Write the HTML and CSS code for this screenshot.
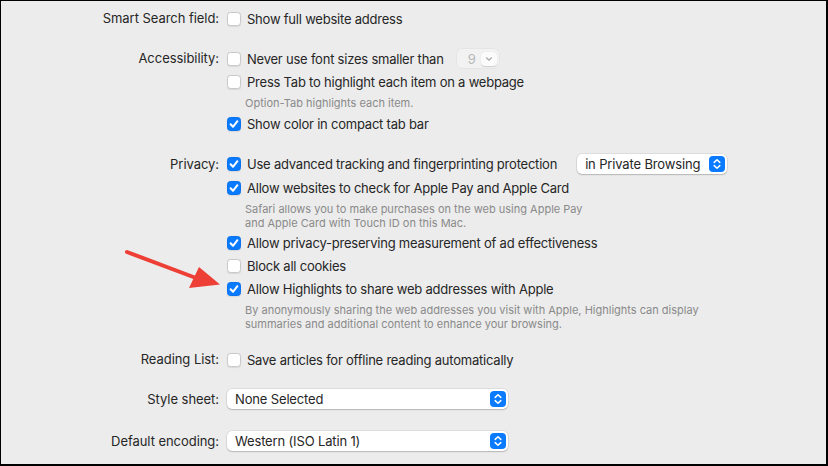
FILE: index.html
```html
<!DOCTYPE html>
<html lang="en">
<head>
  <meta charset="UTF-8">
  <title>Safari Advanced Settings</title>
  <link rel="stylesheet" href="styles.css">
</head>
<body>
  <div class="frame">
    <div class="prefs">
      <section class="group">
        <div class="label">Smart Search field:</div>
        <div class="options">
          <div class="check"><span class="box"></span>Show full website address</div>
        </div>
      </section>

      <section class="group">
        <div class="label">Accessibility:</div>
        <div class="options">
          <div class="check"><span class="box"></span>Never use font sizes smaller than
            <span class="size-popup">
              <span class="size-value">9</span>
              <span class="size-arrow">
                <svg width="10" height="8" viewBox="0 0 10 8"><path d="M2.5 2.8 L5 5.2 L7.5 2.8" fill="none" stroke="#a9a9a9" stroke-width="1.2" stroke-linecap="round" stroke-linejoin="round"/></svg>
              </span>
            </span>
          </div>
          <div class="check"><span class="box"></span>Press Tab to highlight each item on a webpage</div>
          <p class="help">Option-Tab highlights each item.</p>
          <div class="check"><span class="box on"><svg width="14" height="14" viewBox="0 0 14 14"><path d="M3.6 7.3 L6 9.8 L10.4 4.2" fill="none" stroke="#fff" stroke-width="2" stroke-linecap="round" stroke-linejoin="round"/></svg></span>Show color in compact tab bar</div>
        </div>
      </section>

      <section class="group">
        <div class="label label-tall">Privacy:</div>
        <div class="options">
          <div class="check check-tall"><span class="box on"><svg width="14" height="14" viewBox="0 0 14 14"><path d="M3.6 7.3 L6 9.8 L10.4 4.2" fill="none" stroke="#fff" stroke-width="2" stroke-linecap="round" stroke-linejoin="round"/></svg></span>Use advanced tracking and fingerprinting protection
            <span class="popup popup-private">
              <span>in Private Browsing</span>
              <span class="stepper"><svg width="16" height="16" viewBox="0 0 16 16"><path d="M5.2 6.4 L8 3.8 L10.8 6.4 M5.2 9.6 L8 12.2 L10.8 9.6" fill="none" stroke="#fff" stroke-width="1.5" stroke-linecap="round" stroke-linejoin="round"/></svg></span>
            </span>
          </div>
          <div class="check"><span class="box on"><svg width="14" height="14" viewBox="0 0 14 14"><path d="M3.6 7.3 L6 9.8 L10.4 4.2" fill="none" stroke="#fff" stroke-width="2" stroke-linecap="round" stroke-linejoin="round"/></svg></span>Allow websites to check for Apple Pay and Apple Card</div>
          <p class="help help-tight">Safari allows you to make purchases on the web using Apple Pay<br>and Apple Card with Touch ID on this Mac.</p>
          <div class="check"><span class="box on"><svg width="14" height="14" viewBox="0 0 14 14"><path d="M3.6 7.3 L6 9.8 L10.4 4.2" fill="none" stroke="#fff" stroke-width="2" stroke-linecap="round" stroke-linejoin="round"/></svg></span>Allow privacy-preserving measurement of ad effectiveness</div>
          <div class="check"><span class="box"></span>Block all cookies</div>
          <div class="check"><span class="box on"><svg width="14" height="14" viewBox="0 0 14 14"><path d="M3.6 7.3 L6 9.8 L10.4 4.2" fill="none" stroke="#fff" stroke-width="2" stroke-linecap="round" stroke-linejoin="round"/></svg></span>Allow Highlights to share web addresses with Apple</div>
          <p class="help help-last">By anonymously sharing the web addresses you visit with Apple, Highlights can display<br>summaries and additional content to enhance your browsing.</p>
        </div>
      </section>

      <section class="group">
        <div class="label">Reading List:</div>
        <div class="options">
          <div class="check"><span class="box"></span>Save articles for offline reading automatically</div>
        </div>
      </section>

      <section class="group">
        <div class="label label-popup">Style sheet:</div>
        <div class="options popup-row">
          <span class="popup popup-wide">
            <span>None Selected</span>
            <span class="stepper"><svg width="16" height="16" viewBox="0 0 16 16"><path d="M5.2 6.4 L8 3.8 L10.8 6.4 M5.2 9.6 L8 12.2 L10.8 9.6" fill="none" stroke="#fff" stroke-width="1.5" stroke-linecap="round" stroke-linejoin="round"/></svg></span>
          </span>
        </div>
      </section>

      <section class="group group-last">
        <div class="label label-popup">Default encoding:</div>
        <div class="options popup-row">
          <span class="popup popup-wide">
            <span>Western (ISO Latin 1)</span>
            <span class="stepper"><svg width="16" height="16" viewBox="0 0 16 16"><path d="M5.2 6.4 L8 3.8 L10.8 6.4 M5.2 9.6 L8 12.2 L10.8 9.6" fill="none" stroke="#fff" stroke-width="1.5" stroke-linecap="round" stroke-linejoin="round"/></svg></span>
          </span>
        </div>
      </section>
    </div>

    <!-- red annotation arrow -->
    <svg class="arrow" width="828" height="466" viewBox="0 0 828 466">
      <line x1="127" y1="252" x2="196" y2="278" stroke="#ee3f36" stroke-width="4" stroke-linecap="round"/>
      <polygon points="220,284.5 199,267 189,288" fill="#ee3f36"/>
    </svg>
  </div>
</body>
</html>
```

FILE: styles.css
```css
:root {
  --bg-color: #ececec;
  --text-color: #262626;
  --help-color: #8a8a8a;
  --accent: #0a7bff;
}
body {
  margin: 0;
  background: #000;
  font-family: "Inter", "Noto Sans", sans-serif;
  font-size: 13px;
  color: var(--text-color);
}
.frame {
  position: relative;
  width: 828px;
  height: 466px;
  box-sizing: border-box;
  border-style: solid;
  border-color: #000;
  border-width: 1px 2px 2px 1px;
  background: var(--bg-color);
  overflow: hidden;
}
.prefs {
  padding-top: 6px;
}
.group {
  display: grid;
  grid-template-columns: 218px 1fr;
  column-gap: 8px;
}
.group + .group {
  margin-top: 17px;
}
.group-last {
  margin-top: 20px !important;
}
.label {
  text-align: right;
  line-height: 23px;
  white-space: nowrap;
  letter-spacing: -0.05px;
}
.label-tall {
  line-height: 24px;
}
.label-popup {
  line-height: 22px;
}
.check {
  display: flex;
  align-items: center;
  height: 23px;
  white-space: nowrap;
  letter-spacing: -0.22px;
}
.check-tall {
  height: 24px;
}
.box {
  width: 14px;
  height: 14px;
  box-sizing: border-box;
  margin-right: 6px;
  border-radius: 3.5px;
  background: #fff;
  border: 1px solid #c9c9c9;
  box-shadow: 0 0.5px 1px rgba(0, 0, 0, 0.08);
  flex-shrink: 0;
  display: flex;
}
.box.on {
  background: var(--accent);
  border-color: #0a72ee;
}
.box.on svg {
  margin: -1px;
}
.help {
  margin: 3px 0 2px;
  padding-left: 18px;
  font-size: 11px;
  line-height: 14px;
  color: var(--help-color);
}
.help-tight {
  margin-bottom: 1px;
}
.help-last {
  margin-bottom: 0;
}
.size-popup {
  display: flex;
  align-items: center;
  justify-content: space-between;
  width: 42px;
  height: 19px;
  margin-left: 13px;
  padding: 0 2px 0 11px;
  box-sizing: border-box;
  border-radius: 5px;
  background: rgba(255, 255, 255, 0.35);
  box-shadow: 0 0 0 0.5px rgba(0, 0, 0, 0.06);
}
.size-value {
  color: #b8b8b8;
}
.size-arrow {
  width: 16px;
  height: 14px;
  border-radius: 4px;
  background: #fbfbfb;
  box-shadow: 0 0.5px 1px rgba(0, 0, 0, 0.15);
  display: flex;
  align-items: center;
  justify-content: center;
}
.popup {
  display: flex;
  align-items: center;
  justify-content: space-between;
  height: 20px;
  padding: 0 2px 0 8px;
  box-sizing: border-box;
  border-radius: 5px;
  background: #fff;
  letter-spacing: -0.15px;
  box-shadow: 0 0 0 0.5px rgba(0, 0, 0, 0.12), 0 1px 1.5px rgba(0, 0, 0, 0.18);
}
.popup-private {
  width: 150px;
  margin-left: 20px;
}
.popup-row {
  display: flex;
  align-items: center;
  height: 22px;
}
.popup-wide {
  width: 281px;
}
.stepper {
  width: 16px;
  height: 16px;
  border-radius: 4px;
  background: var(--accent);
  display: flex;
}
.arrow {
  position: absolute;
  left: -1px;
  top: -1px;
  pointer-events: none;
}
```
